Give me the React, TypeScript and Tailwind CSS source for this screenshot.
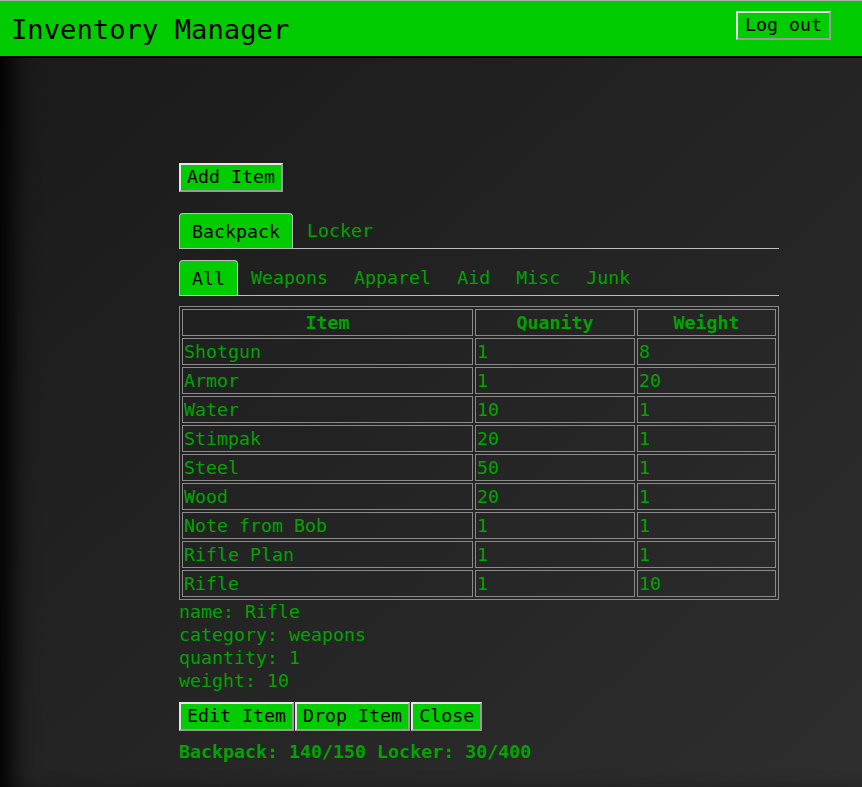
import React from "react";

type Item = { name: string; quantity: number; weight: number };

const items: Item[] = [
    { name: "Shotgun", quantity: 1, weight: 8 },
    { name: "Armor", quantity: 1, weight: 20 },
    { name: "Water", quantity: 10, weight: 1 },
    { name: "Stimpak", quantity: 20, weight: 1 },
    { name: "Steel", quantity: 50, weight: 1 },
    { name: "Wood", quantity: 20, weight: 1 },
    { name: "Note from Bob", quantity: 1, weight: 1 },
    { name: "Rifle Plan", quantity: 1, weight: 1 },
    { name: "Rifle", quantity: 1, weight: 10 },
];

const filters = ["All", "Weapons", "Apparel", "Aid", "Misc", "Junk"];

const btn =
    "bg-[#00cc00] text-black border-2 border-t-[#e6e6e6] border-l-[#e6e6e6] border-r-[#9a9a9a] border-b-[#9a9a9a] px-[6px] h-[29px] leading-none";

export default function App() {
    return (
        <div
            className="min-h-[787px] text-[18.3px] leading-[23px] text-[#00a300] bg-gradient-to-br from-[#191919] to-[#2e2e2e] shadow-[inset_24px_0_24px_-12px_#000]"
            style={{ fontFamily: '"DejaVu Sans Mono", "Liberation Mono", monospace' }}
        >
            {/* Header */}
            <header className="h-[58px] bg-[#00cc00] border-t border-[#b0b0b0] border-b-2 border-b-black flex items-center justify-between pl-[11px] pr-[31px]">
                <h1 className="text-[27.2px] leading-[32px] text-black font-normal mt-[2px]">Inventory Manager</h1>
                <button className={`${btn} self-start mt-[10px] px-[7px]`}>Log out</button>
            </header>

            <main className="ml-[179px] w-[600px] pt-[105px] pb-[20px]">
                <button className={btn}>Add Item</button>

                {/* Storage tabs */}
                <div className="mt-[21px] flex items-end border-b border-[#bdbdbd]">
                    <div className="h-[35px] px-[12px] flex items-center bg-[#00cc00] text-black border border-b-0 border-[#bdbdbd] rounded-t-[4px]">
                        Backpack
                    </div>
                    <div className="h-[35px] px-[14px] flex items-center">Locker</div>
                </div>

                {/* Category tabs */}
                <div className="mt-[11px] flex items-end border-b border-[#bdbdbd]">
                    {filters.map((f, i) =>
                        i === 0 ? (
                            <div
                                key={f}
                                className="h-[35px] px-[12px] flex items-center bg-[#00cc00] text-black border border-b-0 border-[#bdbdbd] rounded-t-[4px]"
                            >
                                {f}
                            </div>
                        ) : (
                            <div key={f} className="h-[35px] pl-[13px] pr-[13px] flex items-center">
                                {f}
                            </div>
                        )
                    )}
                </div>

                {/* Table */}
                <table className="mt-[10px] w-[600px] table-fixed border border-[#8a8a8a] border-separate border-spacing-[2px]">
                    <thead>
                        <tr>
                            <th className="w-[291px] h-[27px] border border-[#8a8a8a] font-bold text-center p-0">Item</th>
                            <th className="w-[160px] h-[27px] border border-[#8a8a8a] font-bold text-center p-0">Quanity</th>
                            <th className="h-[27px] border border-[#8a8a8a] font-bold text-center p-0">Weight</th>
                        </tr>
                    </thead>
                    <tbody>
                        {items.map((item) => (
                            <tr key={item.name}>
                                <td className="h-[27px] border border-[#8a8a8a] px-[1px] py-0">{item.name}</td>
                                <td className="h-[27px] border border-[#8a8a8a] px-[1px] py-0">{item.quantity}</td>
                                <td className="h-[27px] border border-[#8a8a8a] px-[1px] py-0">{item.weight}</td>
                            </tr>
                        ))}
                    </tbody>
                </table>

                {/* Selected item */}
                <div>
                    <div>name: Rifle</div>
                    <div>category: weapons</div>
                    <div>quantity: 1</div>
                    <div>weight: 10</div>
                </div>

                <div className="mt-[10px] flex gap-[1px]">
                    <button className={btn}>Edit Item</button>
                    <button className={btn}>Drop Item</button>
                    <button className={btn}>Close</button>
                </div>

                <p className="mt-[9px] font-bold">Backpack: 140/150 Locker: 30/400</p>
            </main>
        </div>
    );
}
